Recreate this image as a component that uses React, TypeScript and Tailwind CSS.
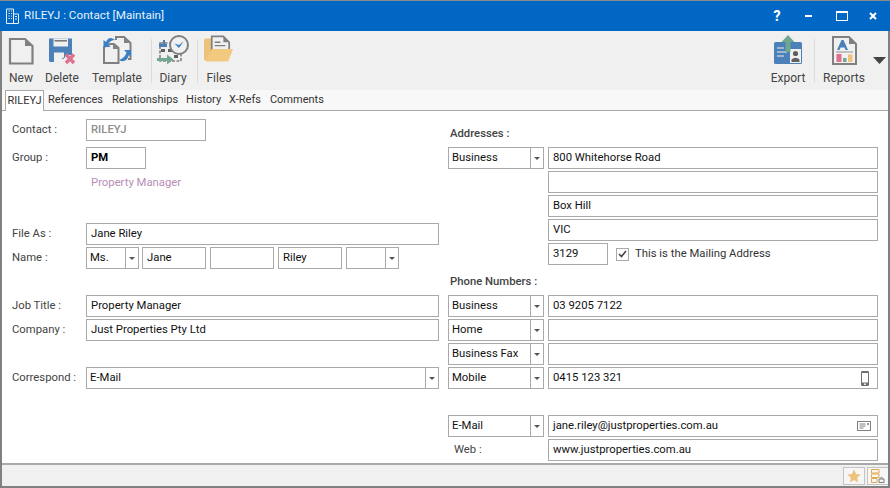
import type { ReactNode } from "react";

const font = { fontFamily: 'Roboto, "Noto Sans", sans-serif' };

function NewIcon() {
  return (
    <svg width="26" height="28" viewBox="0 0 26 28" fill="none">
      <path d="M2 2H17L24.5 9V26.5H2Z" stroke="#808080" strokeWidth="2.2" />
      <path d="M17 2V9H24.5Z" fill="#808080" />
    </svg>
  );
}

function DeleteIcon() {
  return (
    <svg width="28" height="28" viewBox="0 0 28 28" fill="none">
      <path d="M1 1.5H24V18H18L15 23V25H2.5Q1 25 1 23.5Z" fill="#4c80b8" />
      <rect x="5.5" y="1.5" width="14.5" height="8" fill="#f0f0f0" />
      <rect x="6.5" y="3" width="12.5" height="1.6" fill="#7b7b7b" />
      <rect x="6" y="15.5" width="10" height="9.5" fill="#f0f0f0" />
      <path d="M14 22L17 20" stroke="#4c80b8" />
      <path d="M18 17.5L26 26M26 17.5L18 26" stroke="#e0718c" strokeWidth="3.4" />
    </svg>
  );
}

function TemplateIcon() {
  return (
    <svg width="30" height="30" viewBox="0 0 30 30" fill="none">
      <path d="M14 5V2H22L28.5 8V24H26" stroke="#808080" strokeWidth="2" />
      <path d="M22 2V8H28.5Z" fill="#808080" />
      <path d="M2 12L8 9H12L16.5 13V28H2Z" fill="#f0f0f0" stroke="#808080" strokeWidth="2" />
      <path d="M11 9V14H16.5Z" fill="#808080" />
      <path d="M12 6Q6 1 3 8L0.5 6V13H7.5L5 10.5Q7 6 12 6Z" fill="#3b7fc4" transform="translate(1,-1)" />
      <path d="M17 25Q24 29 27 20L29 22V15H22L24.5 17.5Q23 23 17 25Z" fill="#3b7fc4" />
    </svg>
  );
}

function DiaryIcon() {
  return (
    <svg width="32" height="30" viewBox="0 0 32 30" fill="none">
      <rect x="3" y="8" width="21" height="18" fill="none" stroke="#808080" strokeWidth="1.6" strokeDasharray="3 1.5" />
      <rect x="2" y="9" width="8" height="3" fill="#4c80b8" />
      <rect x="6" y="5" width="2" height="6" fill="#4c80b8" />
      <rect x="4" y="14" width="4" height="3" fill="#606060" />
      <rect x="11" y="14" width="4" height="3" fill="#606060" />
      <rect x="17" y="20" width="4" height="3" fill="#606060" />
      <circle cx="22" cy="10" r="9" fill="#f0f0f0" stroke="#808080" strokeWidth="2" />
      <path d="M17.5 8.5L22 13L26.5 6.5L22 10Z" fill="#3b7fc4" />
      <path d="M0 23H10V19.5L16.5 24.5L10 29.5V26H0Z" fill="#6fa78f" />
    </svg>
  );
}

function FilesIcon() {
  return (
    <svg width="30" height="30" viewBox="0 0 31 30" fill="none">
      <path d="M2 26Q0 26 0 24V5Q0 3 2 3H8V24Z" fill="#eec27a" />
      <path d="M8 1H20L26 7V15H8Z" fill="#f0f0f0" stroke="#808080" strokeWidth="1.8" />
      <path d="M20 1V7H26Z" fill="#808080" />
      <path d="M11 7H17M11 10.5H22" stroke="#808080" strokeWidth="1.4" />
      <path d="M2 27L8 14H30L25 27Z" fill="#f2c97f" />
    </svg>
  );
}

function ExportIcon() {
  return (
    <svg width="30" height="30" viewBox="0 0 30 30" fill="none">
      <rect x="1" y="7" width="28" height="22" rx="1.5" fill="#4c80b8" />
      <rect x="17" y="14" width="11" height="14" fill="#f0f0f0" />
      <circle cx="22.5" cy="18.5" r="2.6" fill="#606060" />
      <path d="M18.5 27V24.5Q22.5 21 26.5 24.5V27Z" fill="#606060" />
      <path d="M4 13H11M4 17H14M4 21H11" stroke="#f0f0f0" strokeWidth="1.2" />
      <path d="M15 0L21.5 7H17.5V17H12.5V7H8.5Z" fill="#6fa78f" />
    </svg>
  );
}

function ReportsIcon() {
  return (
    <svg width="25" height="29" viewBox="0 0 25 29" fill="none">
      <path d="M1 1H17L24 8V28H1Z" fill="#f0f0f0" stroke="#808080" strokeWidth="2" />
      <path d="M17 1V8H24Z" fill="#808080" />
      <path d="M5 14L9.5 4H11.5L16 14H13.5L12.5 11.5H8.5L7.5 14Z" fill="#4c80b8" />
      <path d="M4 16H21" stroke="#a0a0a0" strokeWidth="1.2" />
      <rect x="4.5" y="18" width="5" height="8" fill="#e0718c" />
      <rect x="11" y="22" width="3.5" height="4" fill="#6fa78f" />
      <rect x="16" y="18.5" width="4.5" height="7.5" fill="#eec27a" />
    </svg>
  );
}

function ToolButton({ label, w, children }: { label: string; w: string; children: ReactNode }) {
  return (
    <div className={`flex h-full shrink-0 flex-col items-center ${w}`}>
      <div className="flex h-[34px] items-end">{children}</div>
      <div className="mt-[5px] text-[12px] leading-[16px] text-[#444]">{label}</div>
    </div>
  );
}

function Arrow() {
  return (
    <div className="flex w-[13px] shrink-0 items-center justify-center self-stretch border-l border-[#a9a9a9]">
      <svg width="6" height="3" viewBox="0 0 6 3">
        <path d="M0 0H6L3 3Z" fill="#555" />
      </svg>
    </div>
  );
}

function Field({ value = "", className = "text-[#111]", children }: { value?: string; className?: string; children?: ReactNode }) {
  return (
    <div className={`flex h-[22px] shrink-0 items-center justify-between border border-[#a9a9a9] bg-white pr-[6px] pl-[4px] text-[11.3px] ${className}`}>
      <span className="pt-px">{value}</span>
      {children}
    </div>
  );
}

function Combo({ value = "", className = "" }: { value?: string; className?: string }) {
  return (
    <div className={`flex h-[22px] shrink-0 items-center justify-between border border-[#a9a9a9] bg-white pl-[3px] text-[11.3px] text-[#111] ${className}`}>
      <span className="pt-px">{value}</span>
      <Arrow />
    </div>
  );
}

function Label({ children }: { children: ReactNode }) {
  return <div className="w-[84px] shrink-0 pl-[10px] text-[11.3px] leading-[21px] text-[#444]">{children}</div>;
}

function LeftRow({ label, className = "", children }: { label: string; className?: string; children: ReactNode }) {
  return (
    <div className={`flex items-start ${className}`}>
      <Label>{label}</Label>
      {children}
    </div>
  );
}

function RightRow({ combo, value, className = "", children }: { combo: string; value: string; className?: string; children?: ReactNode }) {
  return (
    <div className={`flex gap-[4px] ${className}`}>
      <Combo value={combo} className="w-[96px]" />
      <Field value={value} className="w-[330px] text-[#111]">{children}</Field>
    </div>
  );
}

export default function App() {
  return (
    <div className="flex h-[488px] w-[890px] flex-col overflow-hidden bg-white" style={font}>
      <div className="flex h-[31px] shrink-0 items-center border-t border-[#8a8a8a] bg-[#0068c4] text-white">
        <svg className="ml-[6px]" width="13" height="16" viewBox="0 0 13 16" fill="none">
          <path d="M0.5 15.5V1H7.5V15.5M7.5 6H12.5V15.5H0.5" stroke="#e8f0fa" />
          <path d="M2.5 3H3.8M5 3H6M2.5 5.5H3.8M5 5.5H6M2.5 8H3.8M5 8H6M2.5 10.5H3.8M5 10.5H6M9 8.5H11M9 11H11" stroke="#e8f0fa" />
        </svg>
        <div className="ml-[5px] text-[11.7px] text-[#e8f1fa]">RILEYJ : Contact [Maintain]</div>
        <div className="ml-auto flex items-center">
          <div className="w-[12px] text-center text-[14px] leading-none font-extrabold">?</div>
          <div className="ml-[22px] h-[2px] w-[7px] bg-white" />
          <div className="ml-[24px] h-[10px] w-[12px] border border-t-[2px] border-white" />
          <svg className="mr-[13px] ml-[21px]" width="8" height="8" viewBox="0 0 8 8">
            <path d="M1 1L7 7M7 1L1 7" stroke="white" strokeWidth="2" />
          </svg>
        </div>
      </div>

      <div className="flex min-h-0 flex-1 flex-col border-x-2 border-b-2 border-[#808080]">
        <div className="flex h-[59px] shrink-0 items-stretch bg-[#f0f0f0] pl-[2px]">
          <ToolButton label="New" w="w-[34px]"><NewIcon /></ToolButton>
          <ToolButton label="Delete" w="ml-[3px] w-[42px]"><DeleteIcon /></ToolButton>
          <ToolButton label="Template" w="ml-[4px] w-[60px]"><TemplateIcon /></ToolButton>
          <div className="mt-[8px] ml-[4px] h-[44px] w-px bg-[#dcdcdc]" />
          <ToolButton label="Diary" w="ml-[3px] w-[36px]"><DiaryIcon /></ToolButton>
          <div className="mt-[8px] ml-[6px] h-[44px] w-px bg-[#dcdcdc]" />
          <ToolButton label="Files" w="ml-[3px] w-[36px]"><FilesIcon /></ToolButton>
          <div className="flex-1" />
          <ToolButton label="Export" w="w-[44px]"><ExportIcon /></ToolButton>
          <div className="mt-[8px] ml-[4px] h-[44px] w-px bg-[#dcdcdc]" />
          <ToolButton label="Reports" w="ml-[4px] w-[50px]"><ReportsIcon /></ToolButton>
          <svg className="mt-[26px] mr-[2px] ml-[4px]" width="13" height="7" viewBox="0 0 13 7">
            <path d="M0 0H13L6.5 7Z" fill="#444" />
          </svg>
        </div>

        <div className="flex h-[21px] shrink-0 items-end border-b border-[#a9a9a9] bg-[#f8f8f8] pl-[3px] text-[11px] text-[#333]">
          <div className="-mb-px flex h-[21px] w-[39px] items-center justify-center border-x border-t border-[#a9a9a9] bg-white">RILEYJ</div>
          <div className="flex h-[20px] items-center">
            <span className="ml-[4px]">References</span>
            <span className="ml-[9px]">Relationships</span>
            <span className="ml-[8px]">History</span>
            <span className="ml-[8px]">X-Refs</span>
            <span className="ml-[9px]">Comments</span>
          </div>
        </div>

        <div className="flex min-h-0 flex-1 bg-white">
          <div className="w-[446px] shrink-0 pt-[8px]">
            <LeftRow label="Contact :">
              <Field value="RILEYJ" className="w-[120px] font-medium text-[#8f8f8f]" />
            </LeftRow>
            <LeftRow label="Group :" className="mt-[6px]">
              <Field value="PM" className="w-[60px] font-bold text-black" />
            </LeftRow>
            <div className="mt-[5px] ml-[89px] text-[11.3px] leading-[18px] text-[#b78db7]">Property Manager</div>
            <LeftRow label="File As :" className="mt-[31px]">
              <Field value="Jane Riley" className="w-[353px] text-[#111]" />
            </LeftRow>
            <LeftRow label="Name :" className="mt-[2px]">
              <div className="flex gap-[4px]">
                <Combo value="Ms." className="w-[53px]" />
                <Field value="Jane" className="-ml-px w-[64px] text-[#111]" />
                <Field className="w-[64px]" />
                <Field value="Riley" className="w-[64px] text-[#111]" />
                <Combo className="w-[53px]" />
              </div>
            </LeftRow>
            <LeftRow label="Job Title :" className="mt-[26px]">
              <Field value="Property Manager" className="w-[353px] text-[#111]" />
            </LeftRow>
            <LeftRow label="Company :" className="mt-[2px]">
              <Field value="Just Properties Pty Ltd" className="w-[353px] text-[#111]" />
            </LeftRow>
            <LeftRow label="Correspond :" className="mt-[26px]">
              <Combo value="E-Mail" className="w-[353px]" />
            </LeftRow>
          </div>

          <div className="flex-1 pt-[14px]">
            <div className="pl-[2px] text-[11.3px] leading-[18px] font-medium text-[#444]">Addresses :</div>
            <div className="mt-[4px]">
              <RightRow combo="Business" value="800 Whitehorse Road" />
              <Field className="mt-[2px] ml-[100px] w-[330px]" />
              <Field value="Box Hill" className="mt-[2px] ml-[100px] w-[330px] text-[#111]" />
              <Field value="VIC" className="mt-[2px] ml-[100px] w-[330px] text-[#111]" />
              <div className="mt-[2px] ml-[100px] flex items-center">
                <Field value="3129" className="w-[60px] text-[#111]" />
                <div className="ml-[8px] flex h-[13px] w-[13px] items-center justify-center border border-[#a9a9a9]">
                  <svg width="9" height="8" viewBox="0 0 9 8" fill="none">
                    <path d="M1 4L3.5 6.5L8 1" stroke="#444" strokeWidth="1.6" />
                  </svg>
                </div>
                <span className="ml-[6px] text-[11.3px] text-[#333]">This is the Mailing Address</span>
              </div>
            </div>
            <div className="mt-[8px] pl-[2px] text-[11.3px] leading-[18px] font-medium text-[#444]">Phone Numbers :</div>
            <div className="mt-[4px] flex flex-col gap-[2px]">
              <RightRow combo="Business" value="03 9205 7122" />
              <RightRow combo="Home" value="" />
              <RightRow combo="Business Fax" value="" />
              <RightRow combo="Mobile" value="0415 123 321">
                <svg className="mr-[2px]" width="8" height="15" viewBox="0 0 8 15">
                  <rect x="0" y="0" width="8" height="15" rx="1.2" fill="#707070" />
                  <rect x="1" y="2" width="6" height="9.5" fill="#fff" />
                  <circle cx="4" cy="13.2" r="0.9" fill="#fff" />
                </svg>
              </RightRow>
            </div>
            <RightRow combo="E-Mail" value="jane.riley@justproperties.com.au" className="mt-[26px]">
              <svg width="14" height="10" viewBox="0 0 14 10" fill="none">
                <rect x="0.5" y="0.5" width="13" height="9" stroke="#808080" />
                <path d="M2.5 3H8.5M2.5 5H8.5M2.5 7H6.5" stroke="#808080" />
                <rect x="10" y="2" width="2" height="2" fill="#6fa78f" />
              </svg>
            </RightRow>
            <div className="mt-[2px] flex gap-[4px]">
              <div className="w-[96px] pl-[6px] text-[11.3px] leading-[22px] text-[#444]">Web :</div>
              <Field value="www.justproperties.com.au" className="w-[330px] text-[#111]" />
            </div>
          </div>
        </div>

        <div className="flex h-[23px] shrink-0 items-center justify-end gap-[2px] border-t-2 border-[#a9a9a9] bg-[#f0f0f0]">
          <div className="flex h-[18px] w-[22px] items-center justify-center border border-[#c4c4c4] bg-[#f6f6f6]">
            <svg width="14" height="14" viewBox="0 0 24 24">
              <path d="M12 1L15.5 8.5L23.5 9.5L17.5 15L19 23L12 19L5 23L6.5 15L0.5 9.5L8.5 8.5Z" fill="#eec27a" />
            </svg>
          </div>
          <div className="flex h-[18px] w-[21px] items-center justify-center border border-r-0 border-[#c4c4c4] bg-[#f6f6f6]">
            <svg width="14" height="14" viewBox="0 0 14 14" fill="none">
              <path d="M0.5 0.5H8V4H0.5ZM0.5 5H8V8.5H0.5ZM0.5 9.5H6V13.5H0.5Z" stroke="#e3a94f" />
              <path d="M8 13.5V10H13V13.5ZM9 10Q10.5 6.5 12 10" stroke="#808080" />
            </svg>
          </div>
        </div>
      </div>
    </div>
  );
}
